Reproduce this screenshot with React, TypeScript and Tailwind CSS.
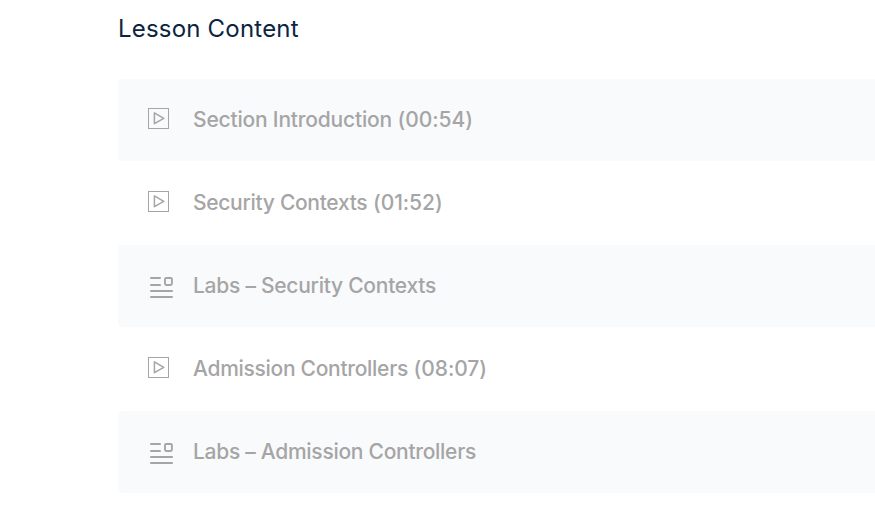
function Play() {
  return (
    <svg className="mb-[3px]" width="21" height="21" viewBox="0 0 21 21" fill="none" stroke="#a5a5a6">
      <rect x="0.5" y="0.5" width="20" height="20" />
      <path d="M6.4 4.8v10.9l9.4-5.4z" strokeWidth="1.5" strokeLinejoin="round" />
    </svg>
  );
}
function Doc() {
  return (
    <svg className="ml-[2px] mt-[3px]" width="23" height="21" viewBox="0 0 23 21" fill="none" stroke="#a5a5a6" strokeWidth="1.8" strokeLinecap="round">
      <path d="M.9 1h9.2M.9 8h9.2M.9 14h21.2M.9 20h21.2" />
      <rect x="15" y="1" width="6.9" height="7" rx="1.2" strokeWidth="1.9" />
    </svg>
  );
}
const lessons = [
  { title: "Section Introduction", time: "(00:54)", type: "video", tracking: "tracking-[-0.19px]" },
  { title: "Security Contexts", time: "(01:52)", type: "video", tracking: "tracking-[-0.3px]" },
  { title: "Labs – Security Contexts", type: "lab", tracking: "tracking-[-0.26px]" },
  { title: "Admission Controllers", time: "(08:07)", type: "video", tracking: "tracking-[-0.29px]" },
  { title: "Labs – Admission Controllers", type: "lab", tracking: "tracking-[-0.28px]" },
];
export default function App() {
  return (
    <main className="h-[528px] w-full overflow-hidden bg-white pl-[118px] pt-[13px] font-['Inter',sans-serif]">
      <h1 className="h-[66px] text-[24px] leading-8 tracking-[0.2px] text-[#0b2540]">Lesson Content</h1>
      <ul className="flex flex-col gap-px">
        {lessons.map((l) => (
          <li key={l.title} className="flex h-[82px] items-center rounded-l bg-white pl-[30px] odd:bg-[#f9fafc]">
            <span className="flex w-[45px] shrink-0">{l.type === "video" ? <Play /> : <Doc />}</span>
            <span className={`text-[21px] font-medium text-[#a5a5a6] [font-feature-settings:'calt'_0] ${l.tracking}`}>
              {l.title}
              {l.time && <span className="tracking-[-0.05px]"> {l.time}</span>}
            </span>
          </li>
        ))}
      </ul>
    </main>
  );
}
